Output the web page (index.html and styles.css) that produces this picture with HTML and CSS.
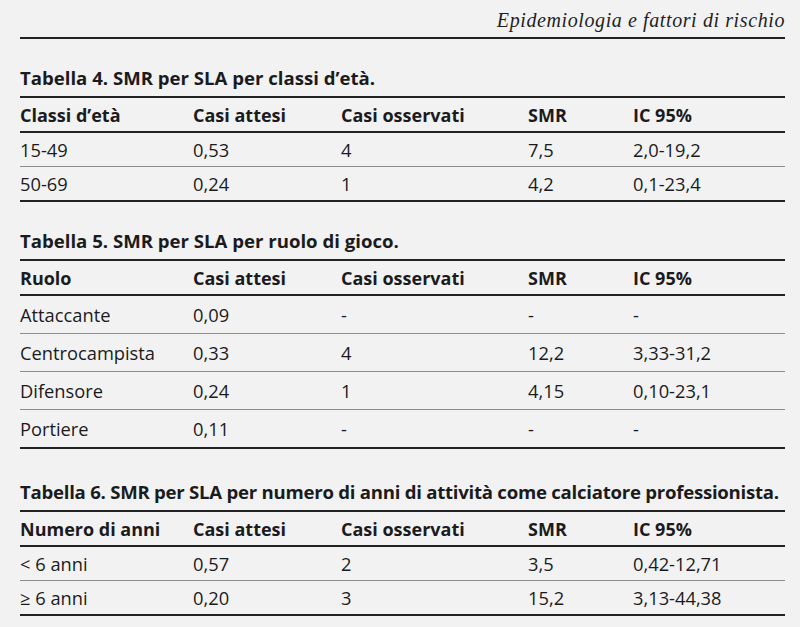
FILE: index.html
```html
<!DOCTYPE html>
<html lang="it">
<head>
<meta charset="utf-8">
<title>Epidemiologia e fattori di rischio</title>
<link rel="stylesheet" href="styles.css">
</head>
<body>
<header class="running">Epidemiologia e fattori di rischio</header>

<section class="sec">
  <h2 class="cap">Tabella 4. SMR per SLA per classi d’età.</h2>
  <div class="tbl t-compact" role="table">
    <div class="tr th" role="row"><span>Classi d’età</span><span>Casi attesi</span><span>Casi osservati</span><span>SMR</span><span>IC 95%</span></div>
    <div class="tr td" role="row"><span>15-49</span><span>0,53</span><span>4</span><span>7,5</span><span>2,0-19,2</span></div>
    <div class="tr td" role="row"><span>50-69</span><span>0,24</span><span>1</span><span>4,2</span><span>0,1-23,4</span></div>
  </div>
</section>

<section class="sec">
  <h2 class="cap">Tabella 5. SMR per SLA per ruolo di gioco.</h2>
  <div class="tbl t-tall" role="table">
    <div class="tr th" role="row"><span>Ruolo</span><span>Casi attesi</span><span>Casi osservati</span><span>SMR</span><span>IC 95%</span></div>
    <div class="tr td" role="row"><span>Attaccante</span><span>0,09</span><span>-</span><span>-</span><span>-</span></div>
    <div class="tr td" role="row"><span>Centrocampista</span><span>0,33</span><span>4</span><span>12,2</span><span>3,33-31,2</span></div>
    <div class="tr td" role="row"><span>Difensore</span><span>0,24</span><span>1</span><span>4,15</span><span>0,10-23,1</span></div>
    <div class="tr td" role="row"><span>Portiere</span><span>0,11</span><span>-</span><span>-</span><span>-</span></div>
  </div>
</section>

<section class="sec sec-wide">
  <h2 class="cap cap-long">Tabella 6. SMR per SLA per numero di anni di attività come calciatore professionista.</h2>
  <div class="tbl t-compact" role="table">
    <div class="tr th" role="row"><span>Numero di anni</span><span>Casi attesi</span><span>Casi osservati</span><span>SMR</span><span>IC 95%</span></div>
    <div class="tr td" role="row"><span>&lt; 6 anni</span><span>0,57</span><span>2</span><span>3,5</span><span>0,42-12,71</span></div>
    <div class="tr td" role="row"><span>≥ 6 anni</span><span>0,20</span><span>3</span><span>15,2</span><span>3,13-44,38</span></div>
  </div>
</section>
</body>
</html>
```

FILE: styles.css
```css
html {
  background: #f2f2f3;
}

body {
  margin: 0;
  padding: 8px 15px 0 20px;
  width: 765px;
  background: #f2f2f3;
  color: #1b1b1d;
  font-family: "Open Sans", "Noto Sans", "DejaVu Sans", sans-serif;
}

.running {
  font-family: "Liberation Serif", "DejaVu Serif", serif;
  font-style: italic;
  font-size: 20px;
  line-height: 24px;
  letter-spacing: 0.6px;
  text-align: right;
  padding-bottom: 5px;
  border-bottom: 2px solid #222;
  color: #1f1f1f;
}

.sec {
  margin-top: 28px;
}

.sec-wide {
  margin-top: 32px;
}

.cap {
  margin: 0 0 7px;
  font-size: 18.6px;
  line-height: 22px;
  font-weight: 700;
  white-space: nowrap;
}

.cap-long {
  letter-spacing: -0.25px;
}

.tbl {
  --row: 33px;
  border-top: 2px solid #222;
  border-bottom: 2px solid #222;
  font-size: 18.3px;
  line-height: 22px;
}

.t-tall {
  --row: 37px;
}

.tr {
  display: grid;
  grid-template-columns: 173px 148px 187px 105px 1fr;
  align-items: center;
  white-space: nowrap;
}

.th {
  height: 33px;
  font-weight: 700;
  font-size: 18px;
  border-bottom: 2px solid #222;
}

.td {
  height: var(--row);
}

.td + .td {
  border-top: 1px solid #8d8d8f;
}
```
